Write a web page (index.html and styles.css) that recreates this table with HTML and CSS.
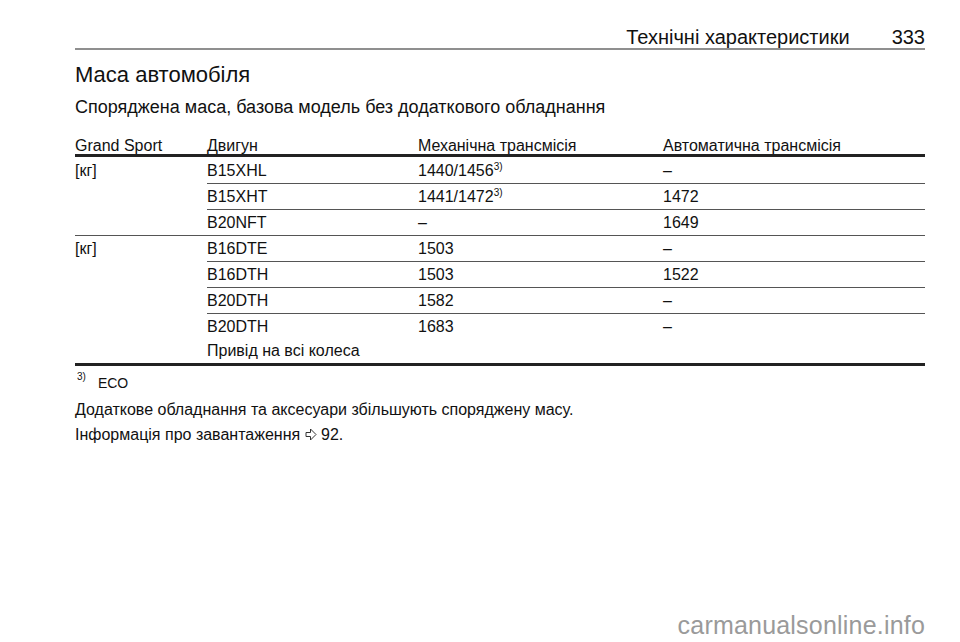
FILE: index.html
```html
<!DOCTYPE html>
<html lang="uk">
<head>
<meta charset="utf-8">
<title>Маса автомобіля</title>
<link rel="stylesheet" href="styles.css">
</head>
<body>
<div class="page">
  <header class="running-head">
    <span class="section">Технічні характеристики</span>
    <span class="pageno">333</span>
  </header>
  <h1 class="title">Маса автомобіля</h1>
  <h2 class="subtitle">Споряджена маса, базова модель без додаткового обладнання</h2>
  <table class="spec">
    <colgroup>
      <col class="c1"><col class="c2"><col class="c3"><col class="c4">
    </colgroup>
    <thead>
      <tr><th>Grand Sport</th><th>Двигун</th><th>Механічна трансмісія</th><th>Автоматична трансмісія</th></tr>
    </thead>
    <tbody>
      <tr class="first"><td rowspan="3" class="unit">[кг]</td><td>B15XHL</td><td>1440/1456<sup>3)</sup></td><td>–</td></tr>
      <tr><td>B15XHT</td><td>1441/1472<sup>3)</sup></td><td>1472</td></tr>
      <tr><td>B20NFT</td><td>–</td><td>1649</td></tr>
      <tr><td rowspan="4" class="unit last">[кг]</td><td>B16DTE</td><td>1503</td><td>–</td></tr>
      <tr><td>B16DTH</td><td>1503</td><td>1522</td></tr>
      <tr><td>B20DTH</td><td>1582</td><td>–</td></tr>
      <tr class="last"><td>B20DTH<br>Привід на всі колеса</td><td>1683</td><td>–</td></tr>
    </tbody>
  </table>
  <p class="footnote"><sup class="fn-mark">3)</sup><span>ECO</span></p>
  <p class="text">Додаткове обладнання та аксесуари збільшують споряджену масу.</p>
  <p class="text">Інформація про завантаження <svg class="ref" width="12" height="13" viewBox="0 0 12 13"><path d="M1 4.5 H5.5 V1 L11 6.5 L5.5 12 V8.5 H1 Z" fill="none" stroke="#333" stroke-width="1" stroke-linejoin="miter"/></svg> 92.</p>
  <div class="watermark">carmanualsonline.info</div>
</div>
</body>
</html>
```
FILE: styles.css
```css
html, body {
  margin: 0;
  padding: 0;
  background: #fff;
}
body {
  font-family: "Liberation Sans", Arial, sans-serif;
  color: #111;
  width: 960px;
  height: 642px;
  overflow: hidden;
}
.page {
  position: relative;
  width: 850px;
  height: 642px;
  margin-left: 75px;
}
.running-head {
  display: flex;
  justify-content: flex-end;
  align-items: baseline;
  gap: 42px;
  height: 50px;
  box-sizing: border-box;
  padding-top: 26px;
  font-size: 20px;
  line-height: 22px;
  border-bottom: 2px solid #8f8f8f;
}
.title {
  margin: 13px 0 0 0;
  font-size: 22px;
  font-weight: normal;
  line-height: 24px;
}
.subtitle {
  margin: 9px 0 0 0;
  font-size: 18px;
  font-weight: normal;
  line-height: 22px;
}
.spec {
  border-collapse: collapse;
  width: 850px;
  margin-top: 20px;
  font-size: 16px;
  table-layout: fixed;
}
.c1 { width: 132px; }
.c2 { width: 211px; }
.c3 { width: 245px; }
.c4 { width: 262px; }
.spec th {
  text-align: left;
  font-weight: normal;
  padding: 0;
  line-height: 16px;
  border-bottom: 3px solid #222;
}
.spec td {
  padding: 4px 0 3px 0;
  line-height: 18px;
  vertical-align: top;
  border-bottom: 1px solid #555;
}
.spec tr.first td {
  padding-top: 5px;
}
.spec td.unit {
  border-bottom: 1px solid #555;
}
.spec tr.last td,
.spec td.unit.last {
  border-bottom: 3px solid #222;
}
.spec tr.last td {
  line-height: 24px;
  padding-top: 1px;
  padding-bottom: 0;
}
.spec sup {
  font-size: 10px;
  vertical-align: 6px;
  line-height: 0;
}
.footnote {
  margin: 8px 0 0 2px;
  font-size: 14px;
  line-height: 18px;
  display: flex;
  gap: 12px;
}
.footnote .fn-mark {
  font-size: 10px;
  vertical-align: 6px;
  line-height: 0;
  position: relative;
  top: 3px;
}
.text {
  margin: 0;
  font-size: 16px;
  line-height: 25px;
}
.footnote + .text {
  margin-top: 5px;
}
.ref {
  vertical-align: -1px;
}
.watermark {
  position: absolute;
  right: 0;
  top: 611px;
  font-size: 25px;
  color: #9a9a9a;
  letter-spacing: 0.2px;
}
```
